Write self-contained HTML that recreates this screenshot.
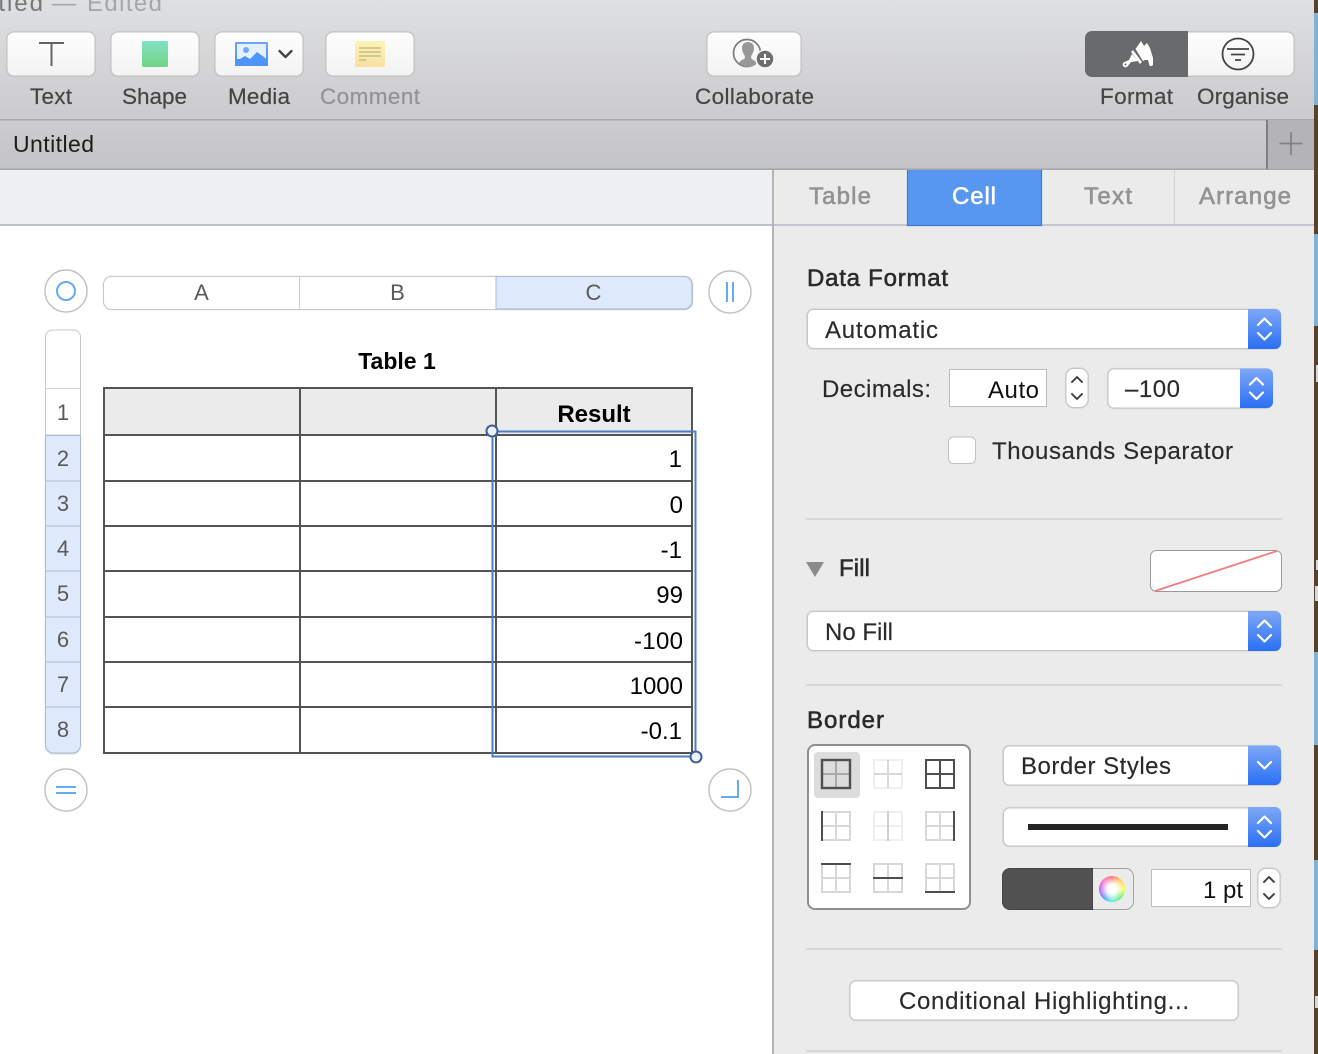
<!DOCTYPE html>
<html><head><meta charset="utf-8"><style>
html,body{margin:0;padding:0;width:1318px;height:1054px;overflow:hidden;background:#fff}
svg{position:absolute;left:0;top:0;display:block}
text{font-family:"Liberation Sans",sans-serif}
.tb{font-size:22.5px;fill:#444;stroke:#444;stroke-width:.2px}
.h{font-size:24px;fill:#2a2a2a;stroke:#2a2a2a;stroke-width:.55px}
.c{font-size:24px;fill:#2a2a2a;stroke:#2a2a2a;stroke-width:.15px}
.n{font-size:24px;fill:#000;text-anchor:end}
.r{font-size:22px;fill:#5a5a5a;text-anchor:middle}
.tab{font-size:24px;fill:#929292;stroke:#929292;stroke-width:.6px}
.btn{fill:url(#bg);stroke:#c2c2c2;stroke-width:1;filter:drop-shadow(0 .6px .5px rgba(0,0,0,.15))}
.sel{fill:#fff;stroke:#c6c6c6;stroke-width:1;filter:drop-shadow(0 .7px .6px rgba(0,0,0,.28))}
.chev{fill:none;stroke:#fff;stroke-width:2.2;stroke-linecap:round;stroke-linejoin:round}
.chevd{fill:none;stroke:#3a3a3a;stroke-width:2.2;stroke-linecap:round;stroke-linejoin:round}
.circ{fill:#fff;stroke:#bdbdbd;stroke-width:1.2;filter:drop-shadow(0 .7px .5px rgba(0,0,0,.18))}
#wheel{position:absolute;left:1099px;top:876px;width:26px;height:26px;border-radius:50%;background:radial-gradient(circle,#fff 0,#fff 25%,rgba(255,255,255,0) 72%),conic-gradient(#f66,#fc4,#ef5,#6e6,#5ee,#58f,#b5e,#f6b,#f66)}
</style></head><body>
<svg width="1318" height="1054" viewBox="0 0 1318 1054" xmlns="http://www.w3.org/2000/svg">
<defs>
<linearGradient id="tbg" x1="0" y1="0" x2="0" y2="1"><stop offset="0" stop-color="#dfe0e2"/><stop offset="1" stop-color="#cbcbcd"/></linearGradient>
<linearGradient id="tab" x1="0" y1="0" x2="0" y2="1"><stop offset="0" stop-color="#cdcdcf"/><stop offset="1" stop-color="#c4c4c6"/></linearGradient>
<linearGradient id="bg" x1="0" y1="0" x2="0" y2="1"><stop offset="0" stop-color="#fdfdfd"/><stop offset="1" stop-color="#f3f3f3"/></linearGradient>
<linearGradient id="blue" x1="0" y1="0" x2="0" y2="1"><stop offset="0" stop-color="#7ea8f6"/><stop offset="1" stop-color="#2a6ff6"/></linearGradient>
<linearGradient id="gr" x1="0" y1="0" x2="0" y2="1"><stop offset="0" stop-color="#82e0c4"/><stop offset="1" stop-color="#70d484"/></linearGradient>
<linearGradient id="ye" x1="0" y1="0" x2="0" y2="1"><stop offset="0" stop-color="#fbf5b6"/><stop offset="1" stop-color="#f7e0a2"/></linearGradient>
<linearGradient id="md" x1="0" y1="0" x2="0" y2="1"><stop offset="0" stop-color="#6da6fb"/><stop offset="1" stop-color="#4a90f8"/></linearGradient>
</defs>

<!-- desktop strip -->
<rect x="1314" y="0" width="4" height="1054" fill="#57432c"/>
<rect x="1314" y="13" width="4" height="92" fill="#7fb3d6"/>
<rect x="1314" y="234" width="4" height="92" fill="#7fb3d6"/>
<rect x="1314" y="652" width="4" height="93" fill="#7fb3d6"/>
<rect x="1314" y="860" width="4" height="90" fill="#7fb3d6"/>
<rect x="1316" y="365" width="2" height="17" fill="#d8d8d8"/>
<rect x="1316" y="560" width="2" height="10" fill="#d8d8d8"/>
<rect x="1315" y="586" width="3" height="15" fill="#d8d8d8"/>
<rect x="1315" y="996" width="3" height="12" fill="#d8d8d8"/>

<!-- toolbar -->
<rect x="0" y="0" width="1314" height="119" fill="url(#tbg)"/>
<rect x="0" y="119" width="1314" height="1.5" fill="#a9a9ab"/>
<rect x="0" y="120.5" width="1314" height="48" fill="url(#tab)"/>
<rect x="0" y="168.5" width="1314" height="1.5" fill="#a5a5a7"/>
<rect x="1266" y="120" width="48" height="49" fill="#b4b4b6"/>
<rect x="1266" y="120" width="2" height="49" fill="#7f7f81"/>
<path d="M1291 132V155M1279.500 143.500H1302.500" stroke="#818183" stroke-width="1.700" fill="none"/>

<text x="-9" y="11" font-size="24" fill="#777" textLength="52">itled</text>
<text x="52" y="11" font-size="24" fill="#a6a7a9" textLength="26">—</text>
<text x="87" y="11" font-size="24" fill="#a6a7a9" textLength="75">Edited</text>

<rect class="btn" x="7" y="32" width="88" height="44" rx="7"/>
<rect class="btn" x="111" y="32" width="88" height="44" rx="7"/>
<rect class="btn" x="215" y="32" width="88" height="44" rx="7"/>
<rect class="btn" x="326" y="32" width="88" height="44" rx="7"/>
<rect class="btn" x="707" y="32" width="94" height="44" rx="7"/>
<rect class="btn" x="1086" y="32" width="208" height="44" rx="7"/>
<path d="M1188 31H1092a7 7 0 0 0-7 7V70a7 7 0 0 0 7 7H1188Z" fill="#696a6b"/>

<!-- T -->
<path d="M39 43H64M51.500 43V66" stroke="#646464" stroke-width="2" fill="none"/>
<!-- shape -->
<rect x="142" y="41" width="26" height="26" rx="1.500" fill="url(#gr)"/>
<!-- media -->
<rect x="235" y="42" width="33" height="24" rx="1" fill="url(#md)"/>
<rect x="237" y="44" width="29" height="15" fill="#e4f0fd"/>
<circle cx="246" cy="50" r="3" fill="#6fa9fb"/>
<path d="M235 62L245 56L250 59L257 52L268 60V66H235Z" fill="#4f94f9"/>
<path d="M279.500 51L285.500 57L291.500 51" fill="none" stroke="#434343" stroke-width="2.300" stroke-linecap="round" stroke-linejoin="round"/>
<!-- comment -->
<rect x="355" y="41" width="30" height="26" rx="1" fill="url(#ye)"/>
<path d="M359 48H381M359 52H381M359 56H381M359 60H366" stroke="#cfc38f" stroke-width="1.700" fill="none"/>
<!-- collaborate -->
<circle cx="747" cy="53" r="13.500" fill="none" stroke="#7c7c7c" stroke-width="1.700"/>
<path d="M739 63C741 59 745 60 745 57C745 55 742 53 742 48C742 44 745 42 748 42C751 42 754 44 754 48C754 53 751 55 751 57C751 60 755 60 757 63C753 68 743 68 739 63Z" fill="#979797"/>
<circle cx="765" cy="59" r="9" fill="#6e6e6e" stroke="#f8f8f8" stroke-width="1.500"/>
<path d="M765 54V64M760 59H770" stroke="#fff" stroke-width="2" fill="none"/>
<!-- brush -->
<path d="M1135.500 49L1141 41L1144 46L1147 43L1150 48L1153 58V64a2 2 0 0 1-4 0L1148 60L1145 60L1143 61Z" fill="#fff"/>
<path d="M1131 52L1133 50L1142 62L1140 64Z" fill="#fff"/>
<path d="M1132 54L1138 61L1131 62L1127.500 66.500A2.800 2.800 0 0 1 1123.500 62.500L1129 60Z" fill="#fff"/>
<circle cx="1125.500" cy="64.500" r="1" fill="#696a6b"/>
<!-- organise -->
<circle cx="1238" cy="54" r="15.500" fill="none" stroke="#444" stroke-width="1.800"/>
<path d="M1227 49H1249M1231 54.500H1245M1235 60H1241" stroke="#444" stroke-width="1.800" fill="none"/>

<text class="tb" x="30" y="104" textLength="42">Text</text>
<text class="tb" x="122" y="104" textLength="65">Shape</text>
<text class="tb" x="228" y="104" textLength="62">Media</text>
<text class="tb" x="320" y="104" textLength="100" style="fill:#929294;stroke:#929294">Comment</text>
<text class="tb" x="695" y="104" textLength="119">Collaborate</text>
<text class="tb" x="1100" y="104" textLength="73">Format</text>
<text class="tb" x="1197" y="104" textLength="92">Organise</text>
<text x="13" y="152" font-size="23" fill="#1c1c1c" textLength="81">Untitled</text>

<!-- canvas strip -->
<rect x="0" y="170" width="773" height="54" fill="#eff0f4"/>
<rect x="0" y="224" width="773" height="2" fill="#bcc0c9"/>

<!-- panel -->
<rect x="773" y="170" width="541" height="884" fill="#ebebeb"/>
<rect x="772" y="170" width="2" height="884" fill="#b4b4b6"/>
<rect x="774" y="224" width="540" height="2" fill="#c3c6cc"/>
<rect x="907" y="170" width="135" height="56" fill="#5797f0"/>
<path d="M907.500 170V225.500H1041.500V170" fill="none" stroke="#3f78cc" stroke-width="1.200"/>
<rect x="1174" y="170" width="1" height="55" fill="#d2d2d2"/>
<text class="tab" x="809" y="204" textLength="62">Table</text>
<text class="tab" x="952" y="204" textLength="44" style="fill:#fff;stroke:#fff">Cell</text>
<text class="tab" x="1084" y="204" textLength="48">Text</text>
<text class="tab" x="1199" y="204" textLength="92">Arrange</text>

<text class="h" x="807" y="286" textLength="141">Data Format</text>
<!-- automatic select -->
<rect class="sel" x="807.500" y="309.500" width="473" height="39" rx="6"/>
<path d="M1248 309H1275a6 6 0 0 1 6 6V343a6 6 0 0 1-6 6H1248Z" fill="url(#blue)"/>
<path class="chev" d="M1258 325L1264.500 318.500L1271 325M1258 333L1264.500 339.500L1271 333"/>
<text class="c" x="825" y="338" textLength="113">Automatic</text>

<text class="c" x="822" y="397" textLength="109">Decimals:</text>
<rect x="949.500" y="369.500" width="97" height="37" fill="#fff" stroke="#bdbdbd"/>
<text x="988" y="398" font-size="24" fill="#111" textLength="51">Auto</text>
<rect class="sel" x="1066" y="368.500" width="22" height="39" rx="8"/>
<path class="chevd" d="M1072 382L1077 377L1082 382M1072 394L1077 399L1082 394" style="stroke-width:1.900"/>
<rect class="sel" x="1108" y="369" width="164" height="39" rx="6"/>
<path d="M1240 368.500H1267a6 6 0 0 1 6 6V402a6 6 0 0 1-6 6H1240Z" fill="url(#blue)"/>
<path class="chev" d="M1250 384.500L1256.500 378L1263 384.500M1250 392.500L1256.500 399L1263 392.500"/>
<text class="c" x="1125" y="397" textLength="55">–100</text>

<rect x="948.500" y="437" width="27" height="26.500" rx="5" fill="#fff" stroke="#c2c2c2"/>
<text class="c" x="992" y="459" textLength="241">Thousands Separator</text>

<rect x="806" y="518" width="476" height="2" fill="#d7d7d7"/>
<path d="M806 562H824L815 577Z" fill="#8b8b8b"/>
<text class="h" x="839" y="576" textLength="31">Fill</text>
<rect x="1150.500" y="550.500" width="131" height="41" rx="6" fill="#fff" stroke="#9a9a9a"/>
<path d="M1155 591L1277 551" stroke="#f27c7c" stroke-width="1.800"/>
<rect class="sel" x="807.500" y="611.500" width="473" height="39" rx="6"/>
<path d="M1248 611H1275a6 6 0 0 1 6 6V645a6 6 0 0 1-6 6H1248Z" fill="url(#blue)"/>
<path class="chev" d="M1258 627L1264.500 620.500L1271 627M1258 635L1264.500 641.500L1271 635"/>
<text class="c" x="825" y="640" textLength="68">No Fill</text>

<rect x="806" y="684" width="476" height="2" fill="#d7d7d7"/>
<text class="h" x="807" y="728" textLength="77">Border</text>

<!-- border grid -->
<rect x="808" y="745" width="162" height="164" rx="7" fill="#fff" stroke="#8f8f8f" stroke-width="2"/>
<rect x="814" y="752" width="46" height="46" rx="4" fill="#dcdcdc"/>
<g fill="none" stroke-width="2">
<path d="M836 760V788M822 774H850" stroke="#a9a9a9"/><rect x="822" y="760" width="28" height="28" stroke="#4f4f4f" stroke-width="2.400"/>
<rect x="874" y="760" width="28" height="28" stroke="#efefef"/><path d="M888 760V788M874 774H902" stroke="#d8d8d8"/>
<rect x="926" y="760" width="28" height="28" stroke="#4f4f4f"/><path d="M940 760V788M926 774H954" stroke="#4f4f4f"/>

<rect x="822" y="812" width="28" height="28" stroke="#d8d8d8"/><path d="M836 812V840M822 826H850" stroke="#d8d8d8"/><path d="M822 811V841" stroke="#4f4f4f"/>
<rect x="874" y="812" width="28" height="28" stroke="#efefef"/><path d="M874 826H902" stroke="#efefef"/><path d="M888 811V841" stroke="#d0d0d0"/>
<rect x="926" y="812" width="28" height="28" stroke="#d8d8d8"/><path d="M940 812V840M926 826H954" stroke="#d8d8d8"/><path d="M954 811V841" stroke="#4f4f4f"/>

<rect x="822" y="864" width="28" height="28" stroke="#d8d8d8"/><path d="M836 864V892M822 878H850" stroke="#d8d8d8"/><path d="M821 864H851" stroke="#4f4f4f"/>
<rect x="874" y="864" width="28" height="28" stroke="#d8d8d8"/><path d="M888 864V892" stroke="#d8d8d8"/><path d="M873 878H903" stroke="#4f4f4f"/>
<rect x="926" y="864" width="28" height="28" stroke="#d8d8d8"/><path d="M940 864V892M926 878H954" stroke="#d8d8d8"/><path d="M925 892H955" stroke="#4f4f4f"/>
</g>

<rect class="sel" x="1003.500" y="746" width="277" height="39" rx="6"/>
<path d="M1248 745.500H1275a6 6 0 0 1 6 6V779a6 6 0 0 1-6 6H1248Z" fill="url(#blue)"/>
<path class="chev" d="M1258 762L1264.500 768.500L1271 762"/>
<text class="c" x="1021" y="774" textLength="150">Border Styles</text>

<rect class="sel" x="1003.500" y="808" width="277" height="38" rx="6"/>
<path d="M1248 807H1275a6 6 0 0 1 6 6V841a6 6 0 0 1-6 6H1248Z" fill="url(#blue)"/>
<path class="chev" d="M1258 823L1264.500 816.500L1271 823M1258 831L1264.500 837.500L1271 831"/>
<rect x="1028" y="824" width="200" height="6" fill="#242424"/>

<rect x="1002.500" y="868.500" width="131" height="41" rx="8" fill="#ebebeb" stroke="#a0a0a0"/>
<path d="M1092.500 868.500H1010a7.500 7.500 0 0 0-7.500 7.500V902a7.500 7.500 0 0 0 7.500 7.500H1092.500Z" fill="#515151" stroke="#444" stroke-width="1"/>

<rect x="1151.500" y="869.500" width="99" height="37" fill="#fff" stroke="#bdbdbd"/>
<text x="1203" y="898" font-size="24" fill="#111" textLength="40">1 pt</text>
<rect class="sel" x="1258" y="868.500" width="22" height="39" rx="8"/>
<path class="chevd" d="M1264 882L1269 877L1274 882M1264 894L1269 899L1274 894" style="stroke-width:1.900"/>

<rect x="806" y="948" width="476" height="2" fill="#d7d7d7"/>
<rect class="sel" x="850" y="981" width="388" height="39" rx="6"/>
<text class="c" x="899" y="1009" textLength="290">Conditional Highlighting...</text>
<rect x="806" y="1050" width="476" height="2" fill="#d7d7d7"/>

<!-- column headers -->
<rect x="103.500" y="276.500" width="589" height="33" rx="8" fill="#fff" stroke="#c8c8c8" style="filter:drop-shadow(0 .5px .4px rgba(0,0,0,.15))"/>
<path d="M496 276.500H684a8 8 0 0 1 8 8V301a8 8 0 0 1-8 8H496Z" fill="#deeafb" stroke="#a9bcd6"/>
<rect x="299" y="277" width="1" height="32" fill="#d0d0d0"/>
<text class="r" x="201.500" y="300">A</text>
<text class="r" x="397.500" y="300">B</text>
<text class="r" x="593.500" y="300">C</text>

<!-- row headers -->
<path d="M45.500 388V337a7 7 0 0 1 7-7H73.500a7 7 0 0 1 7 7V435H45.500Z" fill="#fff" stroke="#c8c8c8"/>
<path d="M45.500 388.500H80.500" stroke="#d0d0d0"/>
<path d="M45.500 435.500H80.500V745a8 8 0 0 1-8 8H53.500a8 8 0 0 1-8-8Z" fill="#deeafb" stroke="#a9bcd6" style="filter:drop-shadow(0 1px 0.6px rgba(0,0,0,.15))"/>
<path d="M46 481H80M46 526H80M46 571H80M46 617H80M46 662H80M46 707H80" stroke="#a9bcd6" fill="none"/>
<text class="r" x="63" y="420">1</text>
<text class="r" x="63" y="466">2</text>
<text class="r" x="63" y="511">3</text>
<text class="r" x="63" y="556">4</text>
<text class="r" x="63" y="601">5</text>
<text class="r" x="63" y="647">6</text>
<text class="r" x="63" y="692">7</text>
<text class="r" x="63" y="737">8</text>

<!-- control circles -->
<circle class="circ" cx="66" cy="291" r="21"/>
<circle cx="66" cy="291" r="9" fill="none" stroke="#65aaf5" stroke-width="2"/>
<circle class="circ" cx="730" cy="292" r="21"/>
<path d="M727 282V302M733 282V302" stroke="#65aaf5" stroke-width="2" fill="none"/>
<circle class="circ" cx="66" cy="790" r="21"/>
<path d="M56 787H76M56 793H76" stroke="#65aaf5" stroke-width="2" fill="none"/>
<circle class="circ" cx="730" cy="790" r="21"/>
<path d="M738 780V797H721" stroke="#65aaf5" stroke-width="2" fill="none"/>

<!-- table -->
<text x="397" y="369" font-size="23" font-weight="bold" fill="#000" text-anchor="middle">Table 1</text>
<rect x="104" y="388" width="588" height="47" fill="#ebebeb"/>
<g stroke="#545454" stroke-width="2" fill="none">
<rect x="104" y="388" width="588" height="365"/>
<path d="M300 388V753M496 388V753"/>
<path d="M104 435H692M104 481H692M104 526H692M104 571H692M104 617H692M104 662H692M104 707H692"/>
</g>
<text x="594" y="422" font-size="24" font-weight="bold" fill="#000" text-anchor="middle">Result</text>
<text class="n" x="682" y="467">1</text>
<text class="n" x="683" y="513">0</text>
<text class="n" x="682" y="558">-1</text>
<text class="n" x="683" y="603">99</text>
<text class="n" x="683" y="649" textLength="49">-100</text>
<text class="n" x="683" y="694">1000</text>
<text class="n" x="682" y="739">-0.1</text>

<!-- selection -->
<rect x="492.500" y="431.500" width="203" height="325" fill="none" stroke="#4a7ec6" stroke-width="2"/>
<circle cx="492" cy="431" r="5.500" fill="#eef1f7" stroke="#3f5f9f" stroke-width="2"/>
<circle cx="696" cy="757" r="5.500" fill="#eef1f7" stroke="#3f5f9f" stroke-width="2"/>
</svg>
<div id="wheel"></div>
</body></html>
